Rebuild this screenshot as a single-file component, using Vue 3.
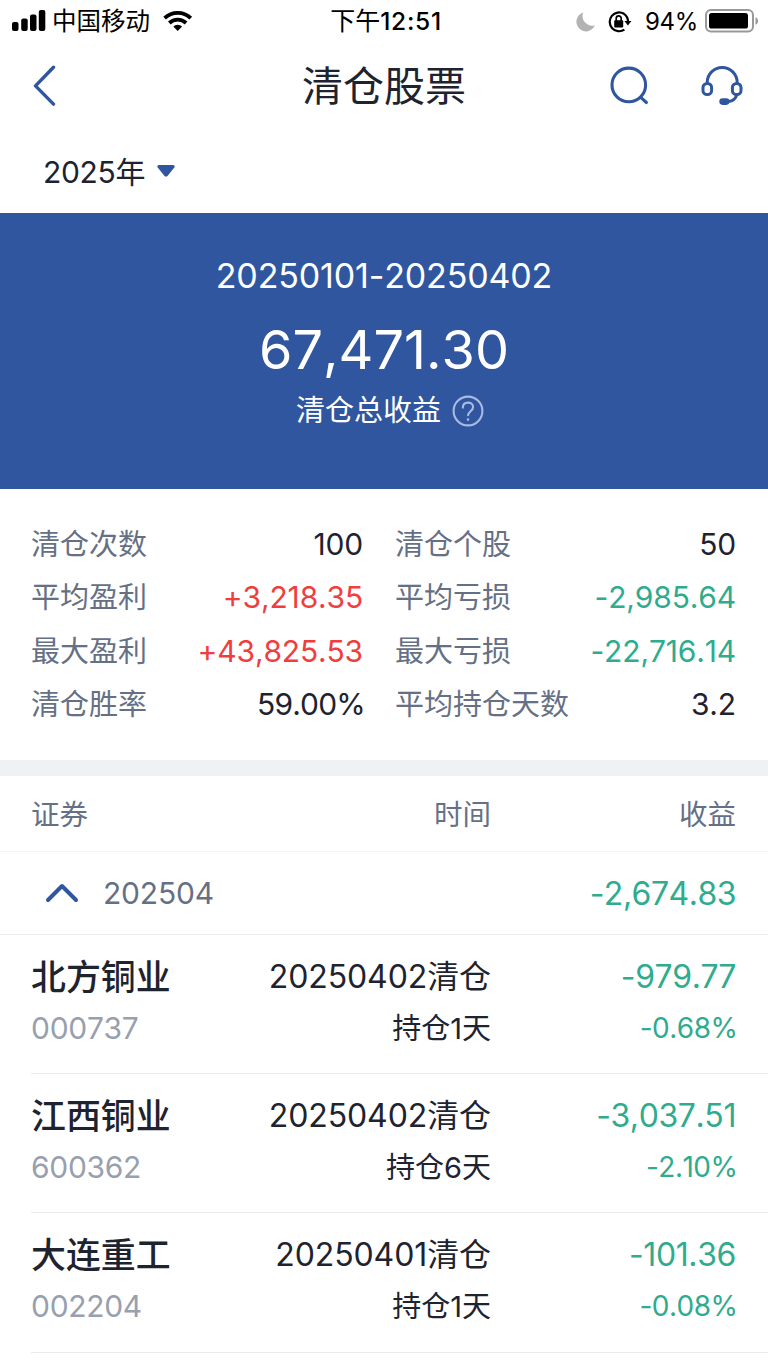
<template>
    <div class="page">
        <div class="status-bar">
            <div class="status-left">
                <svg class="signal" viewBox="0 0 34 22" width="34" height="22">
                    <rect x="0" y="12" width="6.5" height="9" rx="2" />
                    <rect x="9.2" y="8.5" width="6.5" height="12.5" rx="2" />
                    <rect x="18" y="4.5" width="6.5" height="16.5" rx="2" />
                    <rect x="26.8" y="0" width="6.5" height="21" rx="2" />
                </svg>
                <span class="carrier">中国移动</span>
                <svg class="wifi" viewBox="0 0 30 22" width="30" height="22">
                    <g fill="none" stroke="#000" stroke-width="3.8">
                        <path d="M1.6 8.2a19 19 0 0 1 26.2 0" />
                        <path d="M6.3 13a12.4 12.4 0 0 1 16.8 0" />
                    </g>
                    <path d="M14.7 21l-4.4-4.5a6.4 6.4 0 0 1 8.8 0z" />
                </svg>
            </div>
            <div class="status-time">下午<span>12:51</span></div>
            <div class="status-right">
                <svg class="moon" viewBox="0 0 20 20" width="20" height="20">
                    <path d="M7.2.6A9.6 9.6 0 1 0 19 13.2 9.6 9.6 0 0 1 7.2.6z" fill="#b3b3b3" />
                </svg>
                <svg class="lock" viewBox="0 0 24 22" width="24" height="22">
                    <path d="M16 2.8A9.4 9.4 0 1 0 16.4 18.6M16 2.8a9.4 9.4 0 0 1 4 7.7" fill="none" stroke="#000"
                        stroke-width="2.2" />
                    <path d="M16.4 10h7l-3.5 4.4z" />
                    <rect x="6.2" y="9.2" width="9" height="7.2" rx="1" />
                    <path d="M8.2 10V7.4a2.5 2.5 0 0 1 5 0V10" fill="none" stroke="#000" stroke-width="1.7" />
                </svg>
                <span class="percent">94%</span>
                <svg class="battery" viewBox="0 0 54 24" width="54" height="24">
                    <rect x="1" y="1" width="47" height="21.6" rx="5" fill="none" stroke="#999" stroke-width="2" />
                    <rect x="4" y="4" width="39" height="15.6" rx="2.6" />
                    <path d="M50.5 8.2c3.4 1.2 3.4 6.4 0 7.6z" fill="#999" />
                </svg>
            </div>
        </div>

        <header class="nav-bar">
            <svg class="back" viewBox="0 0 24 42" width="24" height="42" fill="none" stroke="#2f569e"
                stroke-width="3.4" stroke-linecap="round" stroke-linejoin="round">
                <path d="M20.5 2.2L2.5 20.9l18 18.2" />
            </svg>
            <h1 class="title">清仓股票</h1>
            <div class="nav-actions">
                <svg viewBox="0 0 40 40" width="40" height="40" fill="none" stroke="#2f569e" stroke-width="3.1"
                    stroke-linecap="round">
                    <circle cx="18.8" cy="18.9" r="16.8" />
                    <path d="M31 31.6l5.4 4.9" />
                </svg>
                <svg viewBox="0 0 42 40" width="42" height="40" fill="none" stroke="#2f569e" stroke-width="3">
                    <path d="M6.2 17.5v-1a15 15 0 0 1 30 0v1" />
                    <rect x="2" y="17.4" width="8.6" height="11.2" rx="4.2" />
                    <rect x="31.4" y="17.4" width="8.6" height="11.2" rx="4.2" />
                    <path d="M35.9 28.6c-1.2 4.4-5 6.8-9.6 7" />
                    <rect x="19.6" y="33.6" width="7.6" height="4" rx="2" fill="#2f569e" stroke-width="2.6" />
                </svg>
            </div>
        </header>

        <div class="year-bar">
            <span class="year">2025年</span>
            <svg viewBox="0 0 18 12" width="18" height="12">
                <path d="M2 0h14q2.6.3 1.3 2.4l-6.6 8.3q-1.7 1.7-3.4 0L.7 2.4Q-.6.3 2 0z" fill="#2f569e" />
            </svg>
        </div>

        <section class="summary">
            <div class="range">20250101-20250402</div>
            <div class="total">67,471.30</div>
            <div class="total-label">
                <span>清仓总收益</span>
                <svg viewBox="0 0 32 32" width="32" height="32" fill="none" stroke="#a9bbe4" stroke-width="2.1"
                    stroke-linecap="round" stroke-linejoin="round">
                    <circle cx="16" cy="16" r="14.4" />
                    <path d="M10.8 12.6c.1-3.2 2.3-5 5.2-5s5.1 1.8 5.1 4.5c0 4.1-5 4.2-5 8.2" />
                    <circle cx="16" cy="24.6" r=".7" fill="#a9bbe4" stroke-width="1.2" />
                </svg>
            </div>
        </section>

        <section class="stats">
            <div v-for="s in stats" :key="s.label" class="stat">
                <span class="stat-label">{{ s.label }}</span>
                <span class="stat-value" :class="s.tone">{{ s.value }}</span>
            </div>
        </section>

        <section class="records">
            <div class="row table-head">
                <span>证券</span>
                <span>时间</span>
                <span>收益</span>
            </div>
            <div class="group">
                <svg viewBox="0 0 34 20" width="34" height="20" fill="none" stroke="#2f569e" stroke-width="4"
                    stroke-linecap="round" stroke-linejoin="round">
                    <path d="M3 17L17 3l14 14" />
                </svg>
                <span class="month">202504</span>
                <span class="group-profit down">-2,674.83</span>
            </div>
            <div v-for="r in records" :key="r.code" class="row record">
                <div class="cell">
                    <span class="name">{{ r.name }}</span>
                    <span class="code">{{ r.code }}</span>
                </div>
                <div class="cell">
                    <span class="date">{{ r.date }}清仓</span>
                    <span class="hold">持仓{{ r.days }}天</span>
                </div>
                <div class="cell">
                    <span class="profit down">{{ r.profit }}</span>
                    <span class="rate down">{{ r.rate }}</span>
                </div>
            </div>
        </section>
    </div>
</template>

<script setup>
const stats = [
    { label: '清仓次数', value: '100' },
    { label: '清仓个股', value: '50' },
    { label: '平均盈利', value: '+3,218.35', tone: 'up' },
    { label: '平均亏损', value: '-2,985.64', tone: 'down' },
    { label: '最大盈利', value: '+43,825.53', tone: 'up' },
    { label: '最大亏损', value: '-22,716.14', tone: 'down' },
    { label: '清仓胜率', value: '59.00%', tone: 'ratio' },
    { label: '平均持仓天数', value: '3.2' }
]

const records = [
    { name: '北方铜业', code: '000737', date: '20250402', days: 1, profit: '-979.77', rate: '-0.68%' },
    { name: '江西铜业', code: '600362', date: '20250402', days: 6, profit: '-3,037.51', rate: '-2.10%' },
    { name: '大连重工', code: '002204', date: '20250401', days: 1, profit: '-101.36', rate: '-0.08%' }
]
</script>

<style>
body {
    margin: 0;
    background: #fff;
}
</style>

<style scoped>
.page {
    width: 768px;
    height: 1367px;
    overflow: hidden;
    background: #fff;
    color: #1e2330;
    font-family: Inter, "Noto Sans CJK SC", sans-serif;
    font-kerning: none;
}

.page svg {
    display: block;
    flex: none;
}

.status-bar {
    display: grid;
    grid-template-columns: 1fr auto 1fr;
    align-items: center;
    height: 42px;
    padding: 0 9px 0 12px;
    color: #000;
    font-size: 24px;
    line-height: 43px;
}

.status-left,
.status-right {
    display: flex;
    align-items: center;
}

.status-right {
    justify-content: flex-end;
}

.signal,
.wifi,
.battery {
    margin-top: -1px;
}

.carrier {
    margin: 0 13px 0 6px;
    font-size: 24.5px;
}

.status-time {
    padding-left: 1px;
    font-size: 25px;
}

.status-time span {
    font-size: 24.5px;
    font-weight: 500;
    letter-spacing: 0.7px;
}

.lock {
    margin: 0 13px 0 12px;
}

.percent {
    letter-spacing: -0.3px;
}

.battery {
    margin-left: 7px;
}

.nav-bar {
    display: grid;
    grid-template-columns: 1fr 164px 1fr;
    align-items: center;
    height: 86px;
    padding: 2px 25px 0 33px;
    box-sizing: border-box;
}

.title {
    margin: 0 0 0 -4px;
    font-size: 41px;
    font-weight: 400;
    line-height: 84px;
    white-space: nowrap;
}

.nav-actions {
    display: flex;
    justify-content: flex-end;
    gap: 51px;
}

.year-bar {
    display: flex;
    align-items: center;
    gap: 12px;
    height: 85px;
    padding-left: 43px;
    font-size: 30px;
    letter-spacing: -0.3px;
}

.year {
    padding-top: 3px;
    line-height: 82px;
}

.summary {
    height: 276px;
    background: #2f569e;
    color: #fff;
    text-align: center;
}

.range {
    padding-top: 38px;
    font-size: 34px;
    letter-spacing: -0.15px;
    line-height: 50px;
}

.total {
    padding-top: 13px;
    font-size: 54px;
    line-height: 72px;
}

.total-label {
    display: flex;
    align-items: center;
    justify-content: center;
    gap: 11px;
    padding: 4px 0 0 12px;
    font-size: 29px;
    line-height: 41px;
}

.stats {
    display: grid;
    grid-template-columns: 332px 341px;
    column-gap: 32px;
    grid-auto-rows: 53.3px;
    height: 242px;
    padding: 29px 32px 0 31px;
}

.stat {
    display: flex;
    justify-content: space-between;
    line-height: 53.3px;
}

.stat-label {
    color: #667085;
    font-size: 29px;
}

.stat-value {
    font-size: 30px;
    letter-spacing: -0.15px;
}

.stat-value.ratio {
    margin-right: -2px;
    letter-spacing: -0.8px;
}

.stat-value.up {
    color: #f03e3e;
}

.down,
.stat-value.down {
    color: #2fab8e;
}

.records {
    border-top: 16px solid #f0f1f4;
}

.row {
    display: grid;
    grid-template-columns: 200px 260px 1fr;
    text-align: right;
}

.row > :first-child {
    text-align: left;
}

.table-head {
    height: 75px;
    padding: 0 32px 0 31px;
    border-bottom: 1px solid #f4f5f7;
    color: #667085;
    font-size: 28.5px;
    line-height: 78px;
}

.group {
    display: flex;
    align-items: center;
    height: 82px;
    padding: 0 32px 0 45px;
    border-bottom: 1px solid #ebedf0;
}

.month {
    margin-left: 24px;
    color: #667085;
    font-size: 30px;
    letter-spacing: -0.2px;
}

.group-profit {
    margin-left: auto;
    font-size: 32px;
    letter-spacing: -0.5px;
}

.record {
    height: 138.2px;
    margin-left: 31px;
    padding-right: 32px;
    border-bottom: 1px solid #e9ebee;
}

.cell {
    display: flex;
    flex-direction: column;
    padding-top: 16px;
    line-height: 52px;
}

.name {
    font-size: 34.9px;
    font-weight: 500;
}

.code {
    color: #989fae;
    font-size: 30px;
    letter-spacing: -0.3px;
    line-height: 51px;
}

.date {
    font-size: 32px;
    letter-spacing: -0.1px;
}

.profit {
    font-size: 32px;
    letter-spacing: -0.4px;
}

.hold {
    font-size: 29px;
}

.rate {
    margin-right: -1.5px;
    font-size: 28px;
    letter-spacing: -0.5px;
    line-height: 51px;
}
</style>
